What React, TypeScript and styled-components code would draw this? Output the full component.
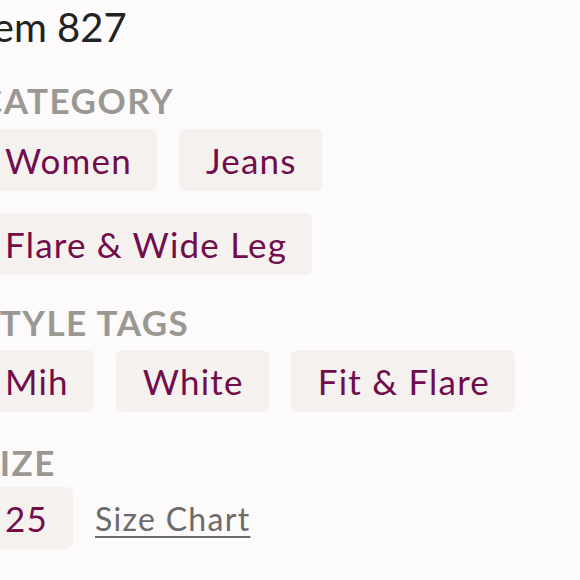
import React from 'react';
import styled, { createGlobalStyle } from 'styled-components';

const GlobalStyle = createGlobalStyle`
  html, body {
    margin: 0;
    padding: 0;
    background: #fcfafb;
    overflow: hidden;
  }
  body {
    font-family: 'Lato', 'Noto Sans', sans-serif;
  }
`;

const Page = styled.div`
  width: 580px;
  height: 580px;
  overflow: hidden;
`;

const Details = styled.div`
  display: flex;
  flex-direction: column;
  margin-left: -22px;
`;

const Title = styled.h1`
  margin: 3px 0 0 -10px;
  font-size: 40px;
  line-height: 48px;
  font-weight: 400;
  color: #222222;
`;

const Section = styled.section<{ $top: number }>`
  display: flex;
  flex-direction: column;
  margin-top: ${({ $top }) => $top}px;
`;

const Label = styled.h2<{ $gap: number }>`
  margin: 0 0 ${({ $gap }) => $gap}px 1px;
  font-size: 35px;
  line-height: 40px;
  font-weight: 700;
  letter-spacing: 1.5px;
  text-transform: uppercase;
  color: #9b9894;
`;

const ChipList = styled.div`
  display: flex;
  flex-wrap: wrap;
  align-items: center;
  gap: 22px;
`;

const Chip = styled.span`
  display: inline-flex;
  align-items: center;
  height: 62px;
  padding: 0 25px 0 27px;
  border-radius: 7px;
  background: #f4f1ef;
  color: #710d4b;
  font-size: 35px;
  letter-spacing: 1.2px;
  line-height: 62px;
`;

const SizeChartLink = styled.a`
  color: #6d6b6a;
  font-size: 32px;
  letter-spacing: 1.3px;
  text-decoration: underline;
  text-decoration-thickness: 2px;
  text-underline-offset: 5px;
  cursor: pointer;
`;

const category = ['Women', 'Jeans', 'Flare & Wide Leg'];
const styleTags = ['Mih', 'White', 'Fit & Flare'];

export default function App() {
  return (
    <Page>
      <GlobalStyle />
      <Details>
        <Title>Item 827</Title>
        <Section $top={29}>
          <Label $gap={9}>Category</Label>
          <ChipList>
            {category.map((c) => (
              <Chip key={c}>{c}</Chip>
            ))}
          </ChipList>
        </Section>
        <Section $top={27}>
          <Label $gap={8}>Style Tags</Label>
          <ChipList>
            {styleTags.map((t) => (
              <Chip key={t}>{t}</Chip>
            ))}
          </ChipList>
        </Section>
        <Section $top={30}>
          <Label $gap={5}>Size</Label>
          <ChipList>
            <Chip>25</Chip>
            <SizeChartLink>Size Chart</SizeChartLink>
          </ChipList>
        </Section>
      </Details>
    </Page>
  );
}
